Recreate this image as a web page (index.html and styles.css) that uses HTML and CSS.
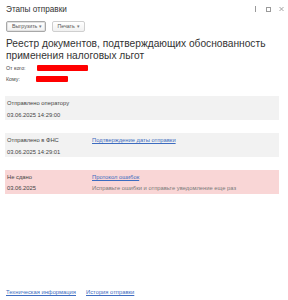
FILE: index.html
```html
<!DOCTYPE html>
<html lang="ru">
<head>
<meta charset="utf-8">
<link rel="stylesheet" href="styles.css">
</head>
<body>
<div class="window">
  <div class="titlebar">
    <div class="title">Этапы отправки</div>
    <div class="controls">
      <svg class="ctl" width="5" height="8" viewBox="0 0 5 8"><rect x="2" y="1" width="1" height="6" fill="#9a9a9a"/></svg>
      <svg class="ctl" width="7" height="8" viewBox="0 0 7 8"><rect x="1.5" y="2.5" width="4" height="4" fill="none" stroke="#9a9a9a" stroke-width="1"/></svg>
      <svg class="ctl" width="7" height="8" viewBox="0 0 7 8"><path d="M1.5 2 L5.5 6 M5.5 2 L1.5 6" stroke="#9a9a9a" stroke-width="0.9"/></svg>
    </div>
  </div>
  <div class="toolbar">
    <div class="btn btn-default">Выгрузить <span class="arr">▾</span></div>
    <div class="btn">Печать <span class="arr">▾</span></div>
  </div>
  <div class="heading">Реестр документов, подтверждающих обоснованность применения налоговых льгот</div>
  <div class="meta">
    <div class="meta-row"><span class="meta-label">От кого:</span><span class="redact r1"></span></div>
    <div class="meta-row"><span class="meta-label">Кому:</span><span class="redact r2"></span></div>
  </div>
  <div class="stages">
    <div class="stage">
      <div class="col1">
        <div class="line">Отправлено оператору</div>
        <div class="line">03.06.2025 14:29:00</div>
      </div>
    </div>
    <div class="stage">
      <div class="col1">
        <div class="line">Отправлено в ФНС</div>
        <div class="line">03.06.2025 14:29:01</div>
      </div>
      <div class="col2">
        <div class="line"><a class="link" href="#">Подтверждение даты отправки</a></div>
      </div>
    </div>
    <div class="stage stage-error">
      <div class="col1">
        <div class="line">Не сдано</div>
        <div class="line">03.06.2025</div>
      </div>
      <div class="col2">
        <div class="line"><a class="link" href="#">Протокол ошибок</a></div>
        <div class="line hint">Исправьте ошибки и отправьте уведомление еще раз</div>
      </div>
    </div>
  </div>
  <div class="footer">
    <a class="link" href="#">Техническая информация</a>
    <a class="link" href="#">История отправки</a>
  </div>
</div>
</body>
</html>
```
FILE: styles.css
```css
html, body {
  margin: 0;
  padding: 0;
  background: #ffffff;
}
body {
  font-family: "Liberation Sans", Arial, sans-serif;
  color: #333333;
}
.window {
  height: 300px;
  box-sizing: border-box;
  padding: 0 9px 4px 5px;
  display: flex;
  flex-direction: column;
}
.titlebar {
  display: flex;
  align-items: center;
  justify-content: space-between;
  height: 20px;
  padding-left: 1px;
}
.title {
  font-size: 8.2px;
  line-height: 10px;
  color: #333;
}
.controls {
  display: flex;
  align-items: center;
  gap: 6px;
  margin-right: -6px;
  margin-top: -3px;
}
.controls .ctl:first-child { margin-right: 1px; }
.ctl { display: block; }
.toolbar {
  display: flex;
  gap: 6px;
  margin-top: 1px;
  padding-left: 1px;
}
.btn {
  height: 9px;
  line-height: 9px;
  font-size: 5.3px;
  color: #555;
  border: 1px solid #cfcfcf;
  border-radius: 2px;
  background: linear-gradient(#ffffff, #f1f1f1);
  padding: 0 4px;
  display: flex;
  align-items: center;
  gap: 2px;
}
.btn-default {
  border-color: #a8a8a8;
  box-shadow: inset 0 0 0 1px #e2e2e2;
  padding: 0 3px 0 5px;
}
.arr {
  font-size: 5px;
  color: #777;
}
.heading {
  margin-top: 6px;
  padding-left: 1px;
  font-size: 10.2px;
  line-height: 12px;
  color: #333;
}
.meta {
  margin-top: 2px;
  padding-left: 1px;
  display: flex;
  flex-direction: column;
  gap: 3px;
}
.meta-row {
  display: flex;
  align-items: center;
  height: 8px;
  font-size: 5.3px;
  color: #444;
}
.meta-label {
  width: 31px;
}
.redact {
  display: block;
  height: 6px;
  background: #ff0000;
  border-radius: 1px;
}
.r1 { width: 51px; }
.r2 { width: 32px; margin-left: -1px; }
.stages {
  margin-top: 13px;
  display: flex;
  flex-direction: column;
  gap: 13px;
}
.stage {
  display: flex;
  background: #f2f2f2;
  padding: 3px 2px 1px;
}
.stage-error {
  background: #f9d6d6;
  padding-bottom: 2px;
}
.col1 {
  width: 85px;
  display: flex;
  flex-direction: column;
  gap: 4px;
}
.col2 {
  display: flex;
  flex-direction: column;
  gap: 4px;
}
.stage-error .col1, .stage-error .col2 { gap: 3px; }
.line {
  font-size: 5.8px;
  line-height: 8px;
  color: #444;
  white-space: nowrap;
}
.hint {
  color: #7a7a7a;
}
.link {
  color: #3d6cc0;
  text-decoration: underline;
  font-size: 5.8px;
  line-height: 8px;
}
.footer {
  margin-top: auto;
  display: flex;
  gap: 10px;
  padding-left: 1px;
}
```
